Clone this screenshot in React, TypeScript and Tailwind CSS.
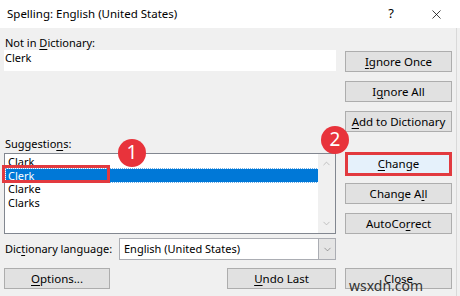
import { ChevronDown, ChevronUp, X } from 'lucide-react'

const font = { fontFamily: '"Noto Sans", "Open Sans", Arial, sans-serif' }

// underline the access-key letter
function Key({ text, k }: { text: string; k: number }) {
  return (
    <>
      {text.slice(0, k)}
      <span className="underline underline-offset-2">{text[k]}</span>
      {text.slice(k + 1)}
    </>
  )
}

function Btn({ children, className = '' }: { children: React.ReactNode; className?: string }) {
  return (
    <div
      className={`flex h-[21px] items-center justify-center whitespace-nowrap border border-[#adadad] bg-[#e1e1e1] text-[11.5px] text-black ${className}`}
    >
      {children}
    </div>
  )
}

function Badge({ n, className }: { n: string; className: string }) {
  return (
    <div
      className={`absolute flex h-[28px] w-[28px] items-center justify-center rounded-full bg-[#e8333b] pb-[1px] text-[19px] text-white ${className}`}
    >
      {n}
    </div>
  )
}

export default function App() {
  const suggestions = ['Clark', 'Clerk', 'Clarke', 'Clarks']

  return (
    <div className="relative h-[296px] w-[460px] overflow-hidden bg-[#f0f0f0] text-[11px] text-black" style={font}>
      {/* Title bar */}
      <div className="flex h-[28px] items-center bg-white pl-[7px] pr-[16px] text-[11.5px]">
        <span>Spelling: English (United States)</span>
        <span className="ml-auto mr-[35px] text-[13px]">?</span>
        <X size={15} strokeWidth={1.2} />
      </div>

      <div className="flex">
        {/* Left column */}
        <div className="ml-[4px] flex w-[332px] flex-col">
          <div className="mt-[8px] h-[14px] whitespace-nowrap pl-[1px] leading-[14px]">
            Not in <Key text="Dictionary:" k={0} />
          </div>
          <div className="h-[21px] bg-white pl-[1px] pt-[1px] leading-[14px]">Clerk</div>

          <div className="mt-[66px] h-[14px] pl-[1px] leading-[14px]">
            <Key text="Suggestions:" k={9} />
          </div>
          <div className="mt-[2px] flex h-[81px] border border-[#828790] bg-white">
            <div className="flex-1 pl-[1px] pt-[1px]">
              {suggestions.map((s) => (
                <div
                  key={s}
                  className={`h-[13.5px] pl-[2px] leading-[13.5px] ${
                    s === 'Clerk' ? 'bg-[#0078d7] text-white outline-1 outline-dotted outline-[#6fb0e8]' : ''
                  }`}
                >
                  {s}
                </div>
              ))}
            </div>
            <div className="flex w-[17px] flex-col items-center justify-between bg-[#f0f0f0] py-[4px] text-[#b0b0b0]">
              <ChevronUp size={11} strokeWidth={1.6} />
              <ChevronDown size={11} strokeWidth={1.6} />
            </div>
          </div>

          <div className="mt-[4px] flex h-[22px] items-center">
            <div className="w-[115px] whitespace-nowrap pl-[1px]">
              <Key text="Dictionary language:" k={3} />
            </div>
            <div className="flex h-[22px] flex-1 items-center border border-[#abadb3] bg-white pl-[4px]">
              <span className="flex-1 whitespace-nowrap">English (United States)</span>
              <div className="flex h-full w-[17px] items-center justify-center border-l border-[#abadb3] bg-[#e5e5e5] text-[#707070]">
                <ChevronDown size={11} strokeWidth={1.4} />
              </div>
            </div>
          </div>

          <div className="mt-[8px] flex justify-between">
            <Btn className="w-[106px]">
              <Key text="Options..." k={0} />
            </Btn>
            <Btn className="w-[109px]">
              <Key text="Undo Last" k={0} />
            </Btn>
          </div>
        </div>

        {/* Right column */}
        <div className="ml-[9px] flex w-[107px] flex-col">
          <Btn className="mt-[23px]">
            <Key text="Ignore Once" k={0} />
          </Btn>
          <Btn className="mt-[9px]">
            <Key text="Ignore All" k={1} />
          </Btn>
          <Btn className="mt-[9px]">
            <Key text="Add to Dictionary" k={0} />
          </Btn>
          <div className="mt-[20px] flex h-[24px] items-center justify-center border-[3px] border-[#e23a3f] bg-[#e5f1fb] text-[11.5px]">
            <Key text="Change" k={0} />
          </div>
          <Btn className="mt-[7px]">
            <Key text="Change All" k={8} />
          </Btn>
          <Btn className="mt-[9px]">
            <Key text="AutoCorrect" k={6} />
          </Btn>
          <Btn className="mt-[34px] items-start pt-[1px]">Close</Btn>
        </div>
      </div>

      <div className="absolute right-[3px] top-[28px] h-[268px] w-px bg-[#d9d9d9]" />

      {/* Callouts */}
      <div className="absolute left-[2px] top-[165px] h-[18px] w-[108px] border-[3px] border-[#e23a3f]" />
      <Badge n="1" className="left-[118px] top-[139px]" />
      <Badge n="2" className="left-[321px] top-[126px]" />

      <div className="absolute left-[349px] top-[278px] text-[14px] leading-[16px] text-[#333]">wsxdn.com</div>
    </div>
  )
}
